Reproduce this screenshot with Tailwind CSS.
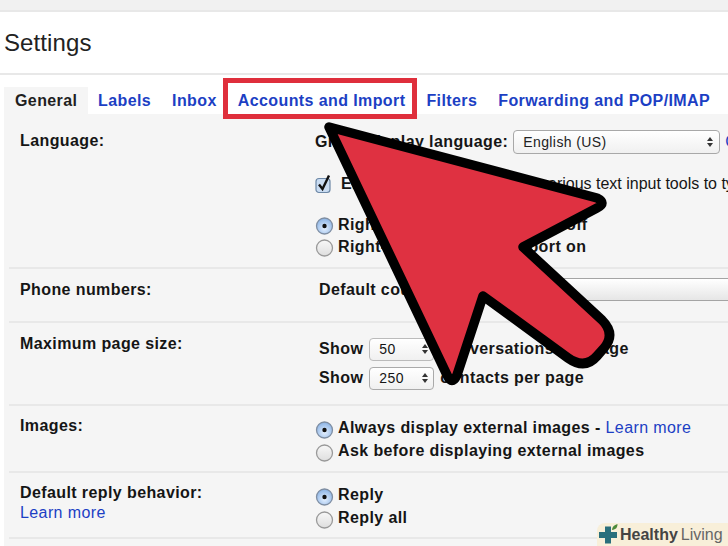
<!DOCTYPE html>
<html>
<head>
<meta charset="utf-8">
<script src="https://cdn.jsdelivr.net/npm/@tailwindcss/browser@4"></script>
</head>
<body class="bg-white">
<div class="relative w-[728px] h-[546px] overflow-hidden bg-white font-['Liberation_Sans',Arial,sans-serif] text-[#151515]">
  <svg class="absolute" width="0" height="0">
    <defs>
      <radialGradient id="on" cx="50%" cy="65%" r="60%"><stop offset="0" stop-color="#e4f0ff"/><stop offset="1" stop-color="#8fb6e6"/></radialGradient>
      <linearGradient id="off" x1="0" y1="0" x2="0" y2="1"><stop offset="0" stop-color="#f8f8f8"/><stop offset="1" stop-color="#dedede"/></linearGradient>
    </defs>
  </svg>
  <div class="h-[12px] bg-[#f1f1f1] border-b-2 border-[#e8e8e8]"></div>
  <div class="h-[63px] pl-[4px] flex items-center border-b-2 border-[#e8e8e8]">
    <h1 class="text-[24px] leading-none text-[#222] tracking-[0.1px]">Settings</h1>
  </div>
  <nav class="h-[39px] pl-[4px] pt-[12px] flex items-stretch text-[16px] font-bold text-[#1c3fc4] tracking-[0.4px]">
    <div class="w-[84px] pl-[11px] leading-[27px] bg-[#f5f5f5] text-[#1f1f1f]">General</div>
    <div class="ml-[10px] leading-[27px]">Labels</div>
    <div class="ml-[21px] leading-[27px]">Inbox</div>
    <div class="ml-[21px] leading-[27px]">Accounts and Import</div>
    <div class="ml-[21px] leading-[27px]">Filters</div>
    <div class="ml-[21px] leading-[27px]">Forwarding and POP/IMAP</div>
  </nav>
  <main class="ml-[4px] h-[432px] bg-[#f5f5f5] pl-[5px] text-[16px] font-bold tracking-[0.4px] whitespace-nowrap">
    <section class="h-[155px] flex border-b-2 border-[#e8e8e8]">
      <div class="w-[306px] pl-[11px] pt-[17px] leading-[20px]">Language:</div>
      <div class="flex-1 min-w-0 overflow-hidden">
        <div class="flex items-center h-[24px] mt-[16px]">
          <span>Gmail display language:</span>
          <div class="ml-[5px] w-[207px] h-[24px] shrink-0 rounded-[4px] border border-[#a8a8a8] bg-linear-to-b from-white to-[#f0f0f0] flex items-center justify-between pl-[9px] pr-[5px] font-normal text-[14px] tracking-[0.4px] text-[#222]"><span>English (US)</span><svg width="8" height="12" viewBox="0 0 8 12"><path d="M4 1 7 5H1zM4 11 1 7H7z" fill="#333"/></svg></div>
          <span class="ml-[5px] text-[#1c3fc4] font-normal">Change</span>
        </div>
        <div class="flex items-center h-[20px] mt-[20px]">
          <svg class="shrink-0" width="17" height="20" viewBox="0 0 17 20"><rect x="1" y="4.500" width="14" height="14" rx="3" fill="#c9dcf2" stroke="#6d88a6" stroke-width="1.200"/><path d="M4 10.500l3.500 4.500L14 1.500" fill="none" stroke="#111" stroke-width="2.400"/></svg>
          <span class="ml-[9px]">Enable input tools<span class="ml-[6px] font-normal tracking-normal"> - Use various text input tools to type</span></span>
        </div>
        <div class="flex items-center h-[22px] mt-[20px]">
          <svg class="shrink-0" width="19" height="19" viewBox="0 0 19 19"><circle cx="9.500" cy="10" r="8" fill="url(#on)" stroke="#7f8ea2" stroke-width="1.300"/><circle cx="9.500" cy="10" r="2.200" fill="#111"/></svg>
          <span class="ml-[4px]">Right-to-left editing support off</span>
        </div>
        <div class="flex items-center h-[22px]">
          <svg class="shrink-0" width="19" height="19" viewBox="0 0 19 19"><circle cx="9.500" cy="10" r="8" fill="url(#off)" stroke="#999" stroke-width="1.300"/></svg>
          <span class="ml-[4px]">Right-to-left editing support on</span>
        </div>
      </div>
    </section>
    <section class="h-[54px] flex border-b-2 border-[#e8e8e8]">
      <div class="w-[306px] pl-[11px] pt-[11px] leading-[20px]">Phone numbers:</div>
      <div class="flex-1 min-w-0 overflow-hidden flex items-start pt-[9px] pl-[4px]">
        <span class="leading-[24px]">Default country code:</span>
        <div class="ml-[12px] w-[300px] h-[23px] shrink-0 border-y border-[#a4a4a4] bg-linear-to-b from-white to-[#e6e6e6]"></div>
      </div>
    </section>
    <section class="h-[83px] flex border-b-2 border-[#e8e8e8]">
      <div class="w-[306px] pl-[11px] pt-[11px] leading-[20px]">Maximum page size:</div>
      <div class="flex-1 min-w-0 pl-[4px] pt-[14px]">
        <div class="flex items-center h-[24px]">
          <span>Show</span>
          <div class="ml-[6px] w-[65px] h-[23px] rounded-[4px] border border-[#bbb] bg-linear-to-b from-white to-[#f0f0f0] flex items-center justify-between pl-[9px] pr-[4px] font-normal text-[14px] tracking-[0.5px]"><span>50</span><svg width="8" height="12" viewBox="0 0 8 12"><path d="M4 1 7 5H1zM4 11 1 7H7z" fill="#333"/></svg></div>
          <span class="ml-[6px]">conversations per page</span>
        </div>
        <div class="flex items-center h-[24px] mt-[5px]">
          <span>Show</span>
          <div class="ml-[6px] w-[65px] h-[23px] rounded-[4px] border border-[#aaa] bg-linear-to-b from-white to-[#f0f0f0] flex items-center justify-between pl-[9px] pr-[4px] font-normal text-[14px] tracking-[0.5px]"><span>250</span><svg width="8" height="12" viewBox="0 0 8 12"><path d="M4 1 7 5H1zM4 11 1 7H7z" fill="#333"/></svg></div>
          <span class="ml-[6px]">contacts per page</span>
        </div>
      </div>
    </section>
    <section class="h-[67px] flex border-b-2 border-[#e8e8e8]">
      <div class="w-[306px] pl-[11px] pt-[10px] leading-[20px]">Images:</div>
      <div class="flex-1 min-w-0 pt-[11px]">
        <div class="flex items-center h-[22px]">
          <svg class="shrink-0 mt-[3px]" width="19" height="19" viewBox="0 0 19 19"><circle cx="9.500" cy="10" r="8" fill="url(#on)" stroke="#7f8ea2" stroke-width="1.300"/><circle cx="9.500" cy="10" r="2.200" fill="#111"/></svg>
          <span class="ml-[4px]">Always display external images - <span class="font-normal text-[#1c3fc4] tracking-[0.4px]">Learn more</span></span>
        </div>
        <div class="flex items-center h-[23px]">
          <svg class="shrink-0 mt-[3px]" width="19" height="19" viewBox="0 0 19 19"><circle cx="9.500" cy="10" r="8" fill="url(#off)" stroke="#999" stroke-width="1.300"/></svg>
          <span class="ml-[4px]">Ask before displaying external images</span>
        </div>
      </div>
    </section>
    <section class="h-[66px] flex border-b-2 border-[#e8e8e8]">
      <div class="w-[306px] pl-[11px] pt-[10px] leading-[20px]">
        <div>Default reply behavior:</div>
        <div class="font-normal text-[#1c3fc4]">Learn more</div>
      </div>
      <div class="flex-1 min-w-0 pt-[11px]">
        <div class="flex items-center h-[22px]">
          <svg class="shrink-0 mt-[3px]" width="19" height="19" viewBox="0 0 19 19"><circle cx="9.500" cy="10" r="8" fill="url(#on)" stroke="#7f8ea2" stroke-width="1.300"/><circle cx="9.500" cy="10" r="2.200" fill="#111"/></svg>
          <span class="ml-[4px]">Reply</span>
        </div>
        <div class="flex items-center h-[23px]">
          <svg class="shrink-0 mt-[3px]" width="19" height="19" viewBox="0 0 19 19"><circle cx="9.500" cy="10" r="8" fill="url(#off)" stroke="#999" stroke-width="1.300"/></svg>
          <span class="ml-[4px]">Reply all</span>
        </div>
      </div>
    </section>
  </main>

  <div class="absolute left-[223px] top-[78px] w-[194px] h-[41px] border-[5px] border-[#df2f3c]"></div>

  <svg class="absolute left-0 top-0" width="728" height="546" viewBox="0 0 728 546">
    <path d="M329 127 L597 198 Q607 203 597 208 L523 247 L602 320 Q616 334 604 348 L597 356 Q585 370 568 358 L483 296 L457 375 Q452 386 447 375 Z" fill="#df3141" stroke="#000" stroke-width="9.500" stroke-linejoin="round"/>
  </svg>

  <div class="absolute right-0 bottom-0 w-[131px] h-[23px] bg-[#f8efd9] rounded-tl-[8px] flex items-center pl-[2px] text-[16px] leading-none whitespace-nowrap">
    <svg class="shrink-0" width="19" height="22" viewBox="0 0 19 22"><path d="M6 2.500h6v5.500h6v6h-6v5.500H6V14H0V8h6z" fill="#2a6f7c"/><path d="M13 6C13 3 15 1 18.500 0 18.500 3.500 17 5.500 13 6z" fill="#4c8a3a"/></svg>
    <span class="ml-[2px] font-bold text-[#444]">Healthy</span><span class="ml-[3px] text-[#666]">Living</span>
  </div>
</div>
</body>
</html>
